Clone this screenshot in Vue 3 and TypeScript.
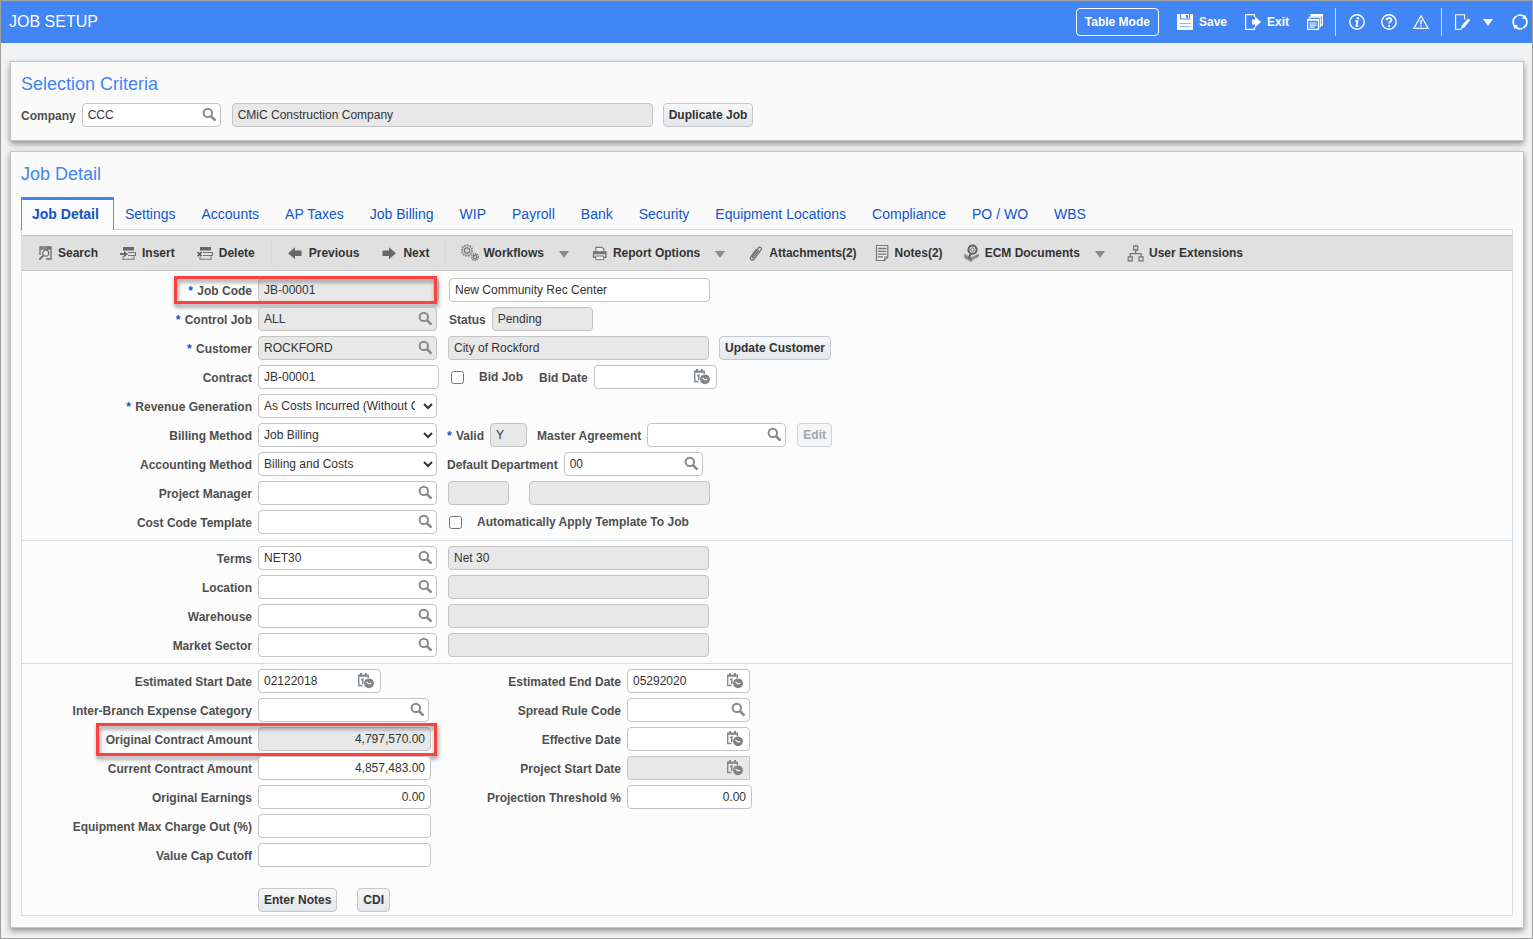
<script setup lang="ts">
import { reactive } from 'vue'

type IconName = 'search' | 'date'
interface Item {
  kind: 'field' | 'select' | 'check' | 'label' | 'button'
  id?: string
  text?: string
  width?: number
  readonly?: boolean
  icon?: IconName
  numeric?: boolean
  required?: boolean
  disabled?: boolean
  square?: boolean
  gap?: 'near' | 'mid' | 'wide' | 'ample' | 'step' | 'far'
}
interface Row {
  id: string
  label: string
  required?: boolean
  mark?: 'code' | 'amount'
  items: Item[]
}

const field = (id: string, width: number, text = '', extra: Partial<Item> = {}): Item => ({ kind: 'field', id, width, text, ...extra })
const lookup = (id: string, width: number, text = '', extra: Partial<Item> = {}): Item => field(id, width, text, { icon: 'search', ...extra })

const mainRows: Row[] = reactive([
  { id: 'job-code', label: 'Job Code', required: true, mark: 'code', items: [
    field('job-code', 181, 'JB-00001', { readonly: true }), field('job-name', 261, 'New Community Rec Center', { gap: 'mid' })] },
  { id: 'control-job', label: 'Control Job', required: true, items: [
    lookup('control-job', 179, 'ALL', { readonly: true }),
    { kind: 'label', id: 'status', text: 'Status', gap: 'ample' }, field('status', 101, 'Pending', { readonly: true, gap: 'near' })] },
  { id: 'customer', label: 'Customer', required: true, items: [
    lookup('customer', 179, 'ROCKFORD', { readonly: true }), field('customer-name', 261, 'City of Rockford', { readonly: true, gap: 'wide' }),
    { kind: 'button', text: 'Update Customer', gap: 'mid' }] },
  { id: 'contract', label: 'Contract', items: [
    field('contract', 181, 'JB-00001'), { kind: 'check', id: 'bid-job', text: 'Bid Job', gap: 'ample' },
    { kind: 'label', id: 'bid-date', text: 'Bid Date', gap: 'step' }, field('bid-date', 123, '', { icon: 'date', gap: 'near' })] },
  { id: 'revenue', label: 'Revenue Generation', required: true, items: [
    { kind: 'select', id: 'revenue', width: 179, text: 'As Costs Incurred (Without Contract)' }] },
  { id: 'billing', label: 'Billing Method', items: [
    { kind: 'select', id: 'billing', width: 179, text: 'Job Billing' },
    { kind: 'label', id: 'valid', text: 'Valid', required: true, gap: 'mid' }, field('valid', 37, 'Y', { readonly: true, gap: 'near' }),
    { kind: 'label', id: 'master', text: 'Master Agreement', gap: 'mid' }, lookup('master', 139, '', { gap: 'near' }),
    { kind: 'button', text: 'Edit', disabled: true, gap: 'wide' }] },
  { id: 'accounting', label: 'Accounting Method', items: [
    { kind: 'select', id: 'accounting', width: 179, text: 'Billing and Costs' },
    { kind: 'label', id: 'department', text: 'Default Department', gap: 'mid' }, lookup('department', 139, '00', { gap: 'near' })] },
  { id: 'manager', label: 'Project Manager', items: [
    lookup('manager', 179), field('manager-code', 61, '', { readonly: true, gap: 'wide' }), field('manager-name', 181, '', { readonly: true, gap: 'far' })] },
  { id: 'template', label: 'Cost Code Template', items: [
    lookup('template', 179), { kind: 'check', id: 'auto-apply', text: 'Automatically Apply Template To Job', gap: 'ample' }] },
])

const termRows: Row[] = reactive([
  ['terms', 'Terms', 'NET30', 'Net 30'],
  ['location', 'Location', '', ''],
  ['warehouse', 'Warehouse', '', ''],
  ['market', 'Market Sector', '', ''],
].map(([id, label, code, name]) => ({
  id, label, items: [lookup(id, 179, code), field(id + '-name', 261, name, { readonly: true, gap: 'wide' })],
})))

const amountRows: Row[] = reactive([
  { id: 'start', label: 'Estimated Start Date', items: [field('start', 123, '02122018', { icon: 'date' })] },
  { id: 'expense', label: 'Inter-Branch Expense Category', items: [lookup('expense', 171)] },
  { id: 'original', label: 'Original Contract Amount', mark: 'amount', items: [field('original', 173, '4,797,570.00', { readonly: true, numeric: true })] },
  { id: 'current', label: 'Current Contract Amount', items: [field('current', 173, '4,857,483.00', { numeric: true })] },
  { id: 'earnings', label: 'Original Earnings', items: [field('earnings', 173, '0.00', { numeric: true })] },
  { id: 'charge', label: 'Equipment Max Charge Out (%)', items: [field('charge', 173)] },
  { id: 'cutoff', label: 'Value Cap Cutoff', items: [field('cutoff', 173)] },
])

const dateRows: Row[] = reactive([
  { id: 'end', label: 'Estimated End Date', items: [field('end', 123, '05292020', { icon: 'date' })] },
  { id: 'spread', label: 'Spread Rule Code', items: [lookup('spread', 123)] },
  { id: 'effective', label: 'Effective Date', items: [field('effective', 123, '', { icon: 'date' })] },
  { id: 'project-start', label: 'Project Start Date', items: [field('project-start', 123, '', { icon: 'date', readonly: true, square: true })] },
  { id: 'threshold', label: 'Projection Threshold %', items: [field('threshold', 125, '0.00', { numeric: true })] },
])

const sections = [
  { name: 'main', columns: [mainRows] },
  { name: 'terms', columns: [termRows] },
  { name: 'amounts', columns: [amountRows, dateRows] },
]

const tabs = ['Job Detail', 'Settings', 'Accounts', 'AP Taxes', 'Job Billing', 'WIP', 'Payroll', 'Bank', 'Security', 'Equipment Locations', 'Compliance', 'PO / WO', 'WBS']

const tools: { text: string; icon: string; menu?: boolean; divider?: boolean; tight?: boolean }[] = [
  { text: 'Search', icon: 'find' },
  { text: 'Insert', icon: 'insert' },
  { text: 'Delete', icon: 'delete', divider: true },
  { text: 'Previous', icon: 'prev' },
  { text: 'Next', icon: 'next', divider: true },
  { text: 'Workflows', icon: 'gears', menu: true },
  { text: 'Report Options', icon: 'print', menu: true },
  { text: 'Attachments(2)', icon: 'clip' },
  { text: 'Notes(2)', icon: 'note', tight: true },
  { text: 'ECM Documents', icon: 'ecm', menu: true },
  { text: 'User Extensions', icon: 'tree' },
]
</script>

<template>
  <div class="app">
    <svg class="sprite" aria-hidden="true">
      <symbol id="i-search" viewBox="0 0 16 16">
        <circle cx="6.8" cy="5.9" r="4.2" fill="none" stroke="#84898d" stroke-width="2" />
        <path d="M9.9 9.1l4.6 4.6" stroke="#84898d" stroke-width="2.6" />
      </symbol>
      <symbol id="i-date" viewBox="0 0 18 18">
        <path d="M5.5 13.5H1.7V3.5h9.6v2.6" fill="none" stroke="#84898d" stroke-width="1.4" />
        <path d="M1 2.8h11v2H1zM3 1h2v3H3zM8 1h2v3H8z" fill="#84898d" />
        <path d="M4 7.9l1.8-1V12" fill="none" stroke="#84898d" stroke-width="1.5" />
        <circle cx="12" cy="11.3" r="4.9" fill="#7d8286" />
        <path d="M9.4 9.9l2.5 1.9 2.4-.4" fill="none" stroke="#fff" stroke-width="1.1" />
      </symbol>
      <symbol id="i-find" viewBox="0 0 18 18">
        <path d="M4 11V3h11v12h-5M4 5h11" fill="none" stroke="#6e6e6e" stroke-width="1.3" />
        <path d="M11 3.2h3.5v1.5H11z" fill="#6e6e6e" />
        <circle cx="9.7" cy="9.2" r="3" fill="#e8e8e8" stroke="#6e6e6e" stroke-width="1.2" />
        <path d="M7.5 11.4l-4.2 4.2" stroke="#6e6e6e" stroke-width="2" />
      </symbol>
      <symbol id="i-insert" viewBox="0 0 18 18">
        <path d="M3 3h11v3.5H3z" fill="#686868" />
        <path d="M8 8.5h7.5v3H8M3 12v3.3h11V12" fill="none" stroke="#777" stroke-width="1.1" />
        <path d="M0 9h4V6.8L8 10l-4 3.2V11H0z" fill="#686868" />
      </symbol>
      <symbol id="i-delete" viewBox="0 0 18 18">
        <path d="M3 3h11v3.5H3z" fill="#686868" />
        <path d="M6 8.5h9.5v3H6M3 12.8v2.5h11v-3" fill="none" stroke="#777" stroke-width="1.1" />
        <path d="M.5 8l4 4.3M4.5 8l-4 4.3" stroke="#555" stroke-width="1.5" />
      </symbol>
      <symbol id="i-prev" viewBox="0 0 18 18"><path d="M1 9.2L8 3.2v3.3h6.5V12H8v3.3z" fill="#686868" /></symbol>
      <symbol id="i-next" viewBox="0 0 18 18"><path d="M15 9.2L8 3.2v3.3H1.5V12H8v3.3z" fill="#686868" /></symbol>
      <symbol id="i-gears" viewBox="0 0 18 18">
        <circle cx="6" cy="6.5" r="5.5" fill="none" stroke="#8a8a8a" stroke-width="1.5" stroke-dasharray="1.7 1.1" />
        <circle cx="6" cy="6.5" r="4.7" fill="none" stroke="#8a8a8a" stroke-width=".8" />
        <circle cx="6" cy="6.5" r="2.6" fill="none" stroke="#777" stroke-width="1.4" />
        <circle cx="14" cy="13" r="3.4" fill="#ddd" stroke="#888" stroke-width="1.6" stroke-dasharray="1.5 .7" />
        <circle cx="14" cy="13" r="1.7" fill="none" stroke="#777" stroke-width="1.4" />
      </symbol>
      <symbol id="i-print" viewBox="0 0 18 18">
        <path d="M4.8 8V3.4h6.2L12.8 5v3" fill="#eee" stroke="#777" stroke-width="1.2" />
        <path d="M2.6 8h12.3v5.4H2.6z" fill="#e4e4e4" stroke="#6e6e6e" stroke-width="1.3" />
        <path d="M2.6 8h12.3v2.2H2.6z" fill="#777" />
        <path d="M4.8 12h8v3.6h-8z" fill="#eee" stroke="#777" />
      </symbol>
      <symbol id="i-clip" viewBox="0 0 18 18">
        <path d="M11.8 6.2l-5 7c-.9 1.2-2.2.3-1.4-.9l5.9-8.2c1.5-2 4.1-.3 2.7 1.8L7.4 14.8c-2 2.6-5.4.4-3.5-2.2L9.5 5" fill="none" stroke="#6e6e6e" stroke-width="1.2" />
      </symbol>
      <symbol id="i-note" viewBox="0 0 18 18">
        <path d="M3.5 1.5h11.3V13l-3.3 3.5h-8z" fill="#e9e9e9" stroke="#777" stroke-width="1.2" />
        <path d="M5 4.5h8.4M5 7.3h8.4M5 10.1h8.4M5 12.9h5" stroke="#777" stroke-width="1.3" />
        <path d="M14.8 13h-3.4v3.5" fill="none" stroke="#777" />
      </symbol>
      <symbol id="i-ecm" viewBox="0 0 18 18">
        <path d="M2 10l6 3 8-4v4l-8 4.3L2 14z" fill="#aaa" />
        <path d="M2 12l6 3 8-4M2 10v4l6 3v-4M8 15v3" fill="none" stroke="#707070" />
        <circle cx="9.5" cy="5.7" r="4.1" fill="#ddd" stroke="#5e5e5e" stroke-width="2" />
        <circle cx="9.5" cy="5.7" r="1.7" fill="none" stroke="#777" />
        <path d="M8 9.5l-2.7 5" stroke="#5e5e5e" stroke-width="2" />
      </symbol>
      <symbol id="i-tree" viewBox="0 0 18 18">
        <path d="M6.7 2h4v4h-4zM1.2 12.8h4v4h-4zM12 12.8h4v4h-4zM8.7 6v4M3.2 12.8V9.7H14v3.1" fill="none" stroke="#777" stroke-width="1.3" />
      </symbol>
      <symbol id="i-save" viewBox="0 0 16 16">
        <path d="M0 0h3v5.5h10V0h3v16H0z" fill="#fff" />
        <path d="M4 0h8v4.5H4zM3 8h10v1H3z" fill="#fff" />
        <path d="M9 1h2v3H9z" fill="#4285f4" />
        <path d="M2.5 9.5h11M2.5 12.5h11" stroke="#8db5f8" />
      </symbol>
      <symbol id="i-exit" viewBox="0 0 16 16">
        <path d="M9.5 3V.6H.6v14.8h8.9V13" fill="none" stroke="#fff" stroke-width="1.2" />
        <path d="M7 5.5h3V2.6L16 8l-6 5.4v-3H7z" fill="#fff" />
      </symbol>
      <symbol id="i-forms" viewBox="0 0 16 16">
        <path d="M4 3V.6h11.4V11H13M4 2h11" fill="none" stroke="#fff" stroke-width="1.3" />
        <path d="M2.3 5.5V3.2h11v9.5H11" fill="none" stroke="#fff" stroke-width="1.1" />
        <path d="M.6 5.6h10.8v9.8H.6z" fill="#4285f4" stroke="#fff" stroke-width="1.2" />
        <path d="M.6 6.2h10.8M2.5 9h7M2.5 11.2h7M2.5 13.2h5" stroke="#fff" stroke-width="1.2" />
      </symbol>
      <symbol id="i-info" viewBox="0 0 16 16">
        <circle cx="8" cy="8" r="7.2" fill="none" stroke="#fff" stroke-width="1.4" />
        <circle cx="8.9" cy="4.2" r="1.3" fill="#fff" />
        <path d="M6.2 7h2.4l-1.2 5h2" fill="none" stroke="#fff" stroke-width="1.7" />
      </symbol>
      <symbol id="i-help" viewBox="0 0 16 16">
        <circle cx="8" cy="8" r="7.2" fill="none" stroke="#fff" stroke-width="1.4" />
        <path d="M5.6 6.3c0-3 4.9-3 4.9-.2 0 1.7-2.4 1.7-2.4 3.4" fill="none" stroke="#fff" stroke-width="1.8" />
        <circle cx="8.1" cy="11.9" r="1.1" fill="#fff" />
      </symbol>
      <symbol id="i-warn" viewBox="0 0 16 16">
        <path d="M8 1.8l7 12.5H1z" fill="none" stroke="#fff" stroke-width="1.3" />
        <path d="M8 6v4.2M8 11.2v1.6" stroke="#fff" stroke-width="1.5" />
      </symbol>
      <symbol id="i-edit" viewBox="0 0 16 16">
        <path d="M9.6 5.5V.8H.6v14.4h6.2" fill="none" stroke="#fff" stroke-width="1.1" />
        <path d="M15.2 6.2l-6 7.2-3.4 1.6 1-3.6 6.2-6.8z" fill="#fff" />
      </symbol>
      <symbol id="i-refresh" viewBox="0 0 16 16">
        <path d="M4.3 13.6A6.6 6.6 0 0 1 5 2M11.5 2.2A6.6 6.6 0 0 1 11 14" fill="none" stroke="#fff" stroke-width="1.7" />
        <path d="M5.5 1.5A6.6 6.6 0 0 1 13 3.7M10.5 14.3A6.6 6.6 0 0 1 3 12.4" fill="none" stroke="#fff" stroke-width="1.7" />
        <path d="M1 11l5 .3-3.2 4zM15 5l-5-.3 3.2-4z" fill="#fff" />
      </symbol>
    </svg>

    <header class="top">
      <h1>JOB SETUP</h1>
      <div class="actions">
        <button type="button" class="mode">Table Mode</button>
        <button type="button" class="act"><svg><use href="#i-save" /></svg>Save</button>
        <button type="button" class="act"><svg><use href="#i-exit" /></svg>Exit</button>
        <button type="button" class="act" aria-label="Forms"><svg><use href="#i-forms" /></svg></button>
      </div>
      <div class="actions ruled">
        <button type="button" class="act" aria-label="Information"><svg><use href="#i-info" /></svg></button>
        <button type="button" class="act" aria-label="Help"><svg><use href="#i-help" /></svg></button>
        <button type="button" class="act" aria-label="Warnings"><svg><use href="#i-warn" /></svg></button>
      </div>
      <div class="actions ruled">
        <button type="button" class="act edit" aria-label="Edit page"><svg><use href="#i-edit" /></svg><span class="caret light"></span></button>
        <button type="button" class="act" aria-label="Refresh"><svg><use href="#i-refresh" /></svg></button>
      </div>
    </header>

    <main>
      <section class="panel criteria">
        <h2>Selection Criteria</h2>
        <div class="row">
          <label class="lbl" for="company">Company</label>
          <span class="field near" :style="{ width: '139px' }">
            <input id="company" value="CCC" />
            <button type="button" class="pick" aria-label="Find company"><svg class="search"><use href="#i-search" /></svg></button>
          </span>
          <span class="field wide readonly" :style="{ width: '421px' }"><input value="CMiC Construction Company" aria-label="Company name" readonly /></span>
          <button type="button" class="btn mid">Duplicate Job</button>
        </div>
      </section>

      <section class="panel detail">
        <h2>Job Detail</h2>
        <nav class="tabs" role="tablist">
          <button v-for="(tab, n) in tabs" :key="tab" type="button" role="tab" :aria-selected="n === 0" :class="{ active: n === 0 }">{{ tab }}</button>
        </nav>
        <div class="content">
          <div class="toolbar">
            <template v-for="tool in tools" :key="tool.text">
              <button type="button" :class="{ tight: tool.tight }">
                <svg><use :href="'#i-' + tool.icon" /></svg>{{ tool.text }}<span v-if="tool.menu" class="caret"></span>
              </button>
              <span v-if="tool.divider" class="divider"></span>
            </template>
          </div>

          <form @submit.prevent>
            <div v-for="section in sections" :key="section.name" class="section">
              <div v-for="(rows, c) in section.columns" :key="c" class="column">
                <div v-for="row in rows" :key="row.id" class="row">
                  <label class="lbl lead" :for="row.id"><i v-if="row.required">*</i> {{ row.label }}</label>
                  <template v-for="(item, n) in row.items" :key="n">
                    <span v-if="item.kind === 'field'" class="field" :class="[item.gap, { readonly: item.readonly, numeric: item.numeric, square: item.square }]" :style="{ width: item.width + 'px' }">
                      <input :id="item.id" v-model="item.text" :readonly="item.readonly" :aria-label="n ? row.label + ' ' + item.id : undefined" />
                      <button v-if="item.icon" type="button" class="pick" :aria-label="'Choose ' + row.label">
                        <svg :class="item.icon"><use :href="'#i-' + item.icon" /></svg>
                      </button>
                    </span>
                    <select v-else-if="item.kind === 'select'" :id="item.id" class="drop" :style="{ width: item.width + 'px' }">
                      <option>{{ item.text }}</option>
                    </select>
                    <label v-else-if="item.kind === 'check'" class="check" :class="item.gap"><input :id="item.id" type="checkbox" />{{ item.text }}</label>
                    <label v-else-if="item.kind === 'label'" class="lbl" :class="item.gap" :for="item.id"><i v-if="item.required">*</i> {{ item.text }}</label>
                    <button v-else type="button" class="btn" :class="item.gap" :disabled="item.disabled">{{ item.text }}</button>
                  </template>
                  <span v-if="row.mark" class="mark" :class="row.mark"></span>
                </div>
              </div>
            </div>
            <div class="foot">
              <button type="button" class="btn">Enter Notes</button>
              <button type="button" class="btn">CDI</button>
            </div>
          </form>
        </div>
      </section>
    </main>
  </div>
</template>

<style>
body { background: #f1f2f4; }
</style>

<style scoped>
* { box-sizing: border-box; }
.app { min-height: 100vh; border: 1px solid #a0a0a0; background: #f1f2f4; color: #333; font: 12px/16px "Liberation Sans", Arial, sans-serif; }
.sprite { position: absolute; width: 0; height: 0; }
button, input, select { font: inherit; color: inherit; margin: 0; }
button { cursor: pointer; }
h1, h2 { margin: 0; font-weight: 400; }

.top { display: flex; align-items: center; height: 42px; padding: 0 4px 0 8px; background: #4285f4; color: #fff; }
h1 { flex: 1; font-size: 16px; line-height: 20px; }
.actions { display: flex; align-items: center; gap: 18px; height: 28px; }
.actions.ruled { gap: 16px; margin-left: 12px; padding-left: 13px; border-left: 1px solid #c6dafc; }
.mode { height: 28px; padding: 0 8px; border: 1px solid #fff; border-radius: 4px; background: none; font-weight: 700; }
.act { display: flex; align-items: center; gap: 6px; padding: 0; border: 0; background: none; font-weight: 700; }
.act svg { width: 16px; height: 16px; }
.act.edit { gap: 12px; margin-right: 3px; }
.caret { border: 5px solid transparent; border-top: 7px solid #84898d; border-bottom: 0; }
.caret.light { border-top-color: #fff; }

main { display: flex; flex-direction: column; gap: 10px; padding: 18px 8px 10px 9px; }
.panel { padding: 11px 10px 13px; border: 1px solid #c4c4c4; background: #fafafa; box-shadow: 0 3px 6px rgba(0, 0, 0, 0.4); }
.detail { padding-bottom: 11px; }
h2 { margin-bottom: 8px; color: #4285f4; font-size: 18px; line-height: 22px; }
.detail h2 { margin-bottom: 12px; }

.tabs { display: flex; height: 33px; border-bottom: 1px solid #d3dee6; }
.tabs button { height: 33px; padding: 0 15px 0 11px; border: 0; background: none; color: #1155cc; font-size: 14px; white-space: nowrap; }
.tabs .active { padding: 0 14px 2px 10px; border: 1px solid #7391a8; border-top: 3px solid #4285f4; border-bottom: 0; background: #fcfcfc; font-weight: 700; }
.content { padding-top: 5px; border: 1px solid #d3dee6; border-top: 0; background: #fcfcfc; }
.toolbar { display: flex; align-items: center; height: 36px; padding-left: 3px; border: 1px solid #c4c4c4; border-width: 1px 0; background: #e0e0e0; }
.toolbar button { display: flex; align-items: center; gap: 4px; padding: 0 11px; border: 0; background: none; font-weight: 700; white-space: nowrap; }
.toolbar .tight { padding: 0 9px 0 5px; }
.toolbar svg { width: 18px; height: 18px; }
.toolbar .caret { margin: 3px 0 0 11px; }
.divider { width: 1px; height: 28px; margin: 0 4px 0 5px; background: #cfdbe4; }

.section { display: flex; padding: 5px 0 6px; border-bottom: 1px solid #d3dee6; }
.section:first-child { padding-top: 7px; }
.section:nth-child(3) { padding-bottom: 0; border-bottom: 0; }
.column { display: flex; flex-direction: column; gap: 5px; }
.row { position: relative; display: flex; align-items: center; height: 24px; }
.lbl { padding-top: 2px; color: #4f4f4f; font-weight: 700; white-space: nowrap; }
.lbl i { margin-right: 1px; color: #1155cc; font-style: normal; }
.lead { width: 230px; margin-right: 6px; text-align: right; }
.column + .column .lead { width: 190px; }
.near { margin-left: 6px; }
.mid { margin-left: 10px; }
.wide { margin-left: 11px; }
.ample { margin-left: 12px; }
.step { margin-left: 16px; }
.far { margin-left: 20px; }

.field { display: flex; align-items: center; height: 24px; border: 1px solid #c4c4c4; border-radius: 4px; background: #fff; }
.field input { flex: 1; min-width: 0; height: 22px; padding: 0 5px; border: 0; outline: 0; background: none; }
.readonly { background: #e8e8e8; }
.square { border-radius: 4px 0 0 4px; }
.numeric input { text-align: right; }
.pick { display: flex; flex: none; padding: 0; border: 0; background: none; }
.pick svg { width: 16px; height: 16px; margin-right: 3px; }
.pick .date { width: 18px; height: 18px; margin-right: 5px; }
.drop { height: 24px; padding: 0 5px 0 1px; border: 1px solid #c4c4c4; border-radius: 4px; background: #fff; }
.check { display: flex; align-items: center; gap: 15px; color: #4f4f4f; font-weight: 700; white-space: nowrap; }
.check input { width: 13px; height: 13px; }
.btn { height: 24px; padding: 0 5px; border: 1px solid #c4c8cc; border-radius: 4px; background: linear-gradient(#f5f7f8, #e3e7ea); font-weight: 700; white-space: nowrap; }
.btn:disabled { border-color: #cfd3d7; background: #f3f5f7; color: #a3a6aa; }
.foot { display: flex; gap: 20px; padding: 21px 0 3px 236px; }

.mark { position: absolute; border: 3px solid #fc4140; filter: drop-shadow(1px 3px 2px rgba(0, 0, 0, 0.45)); pointer-events: none; }
.mark.code { top: -2px; left: 152px; width: 263px; height: 28px; }
.mark.amount { top: -4px; left: 74px; width: 341px; height: 33px; }
</style>
